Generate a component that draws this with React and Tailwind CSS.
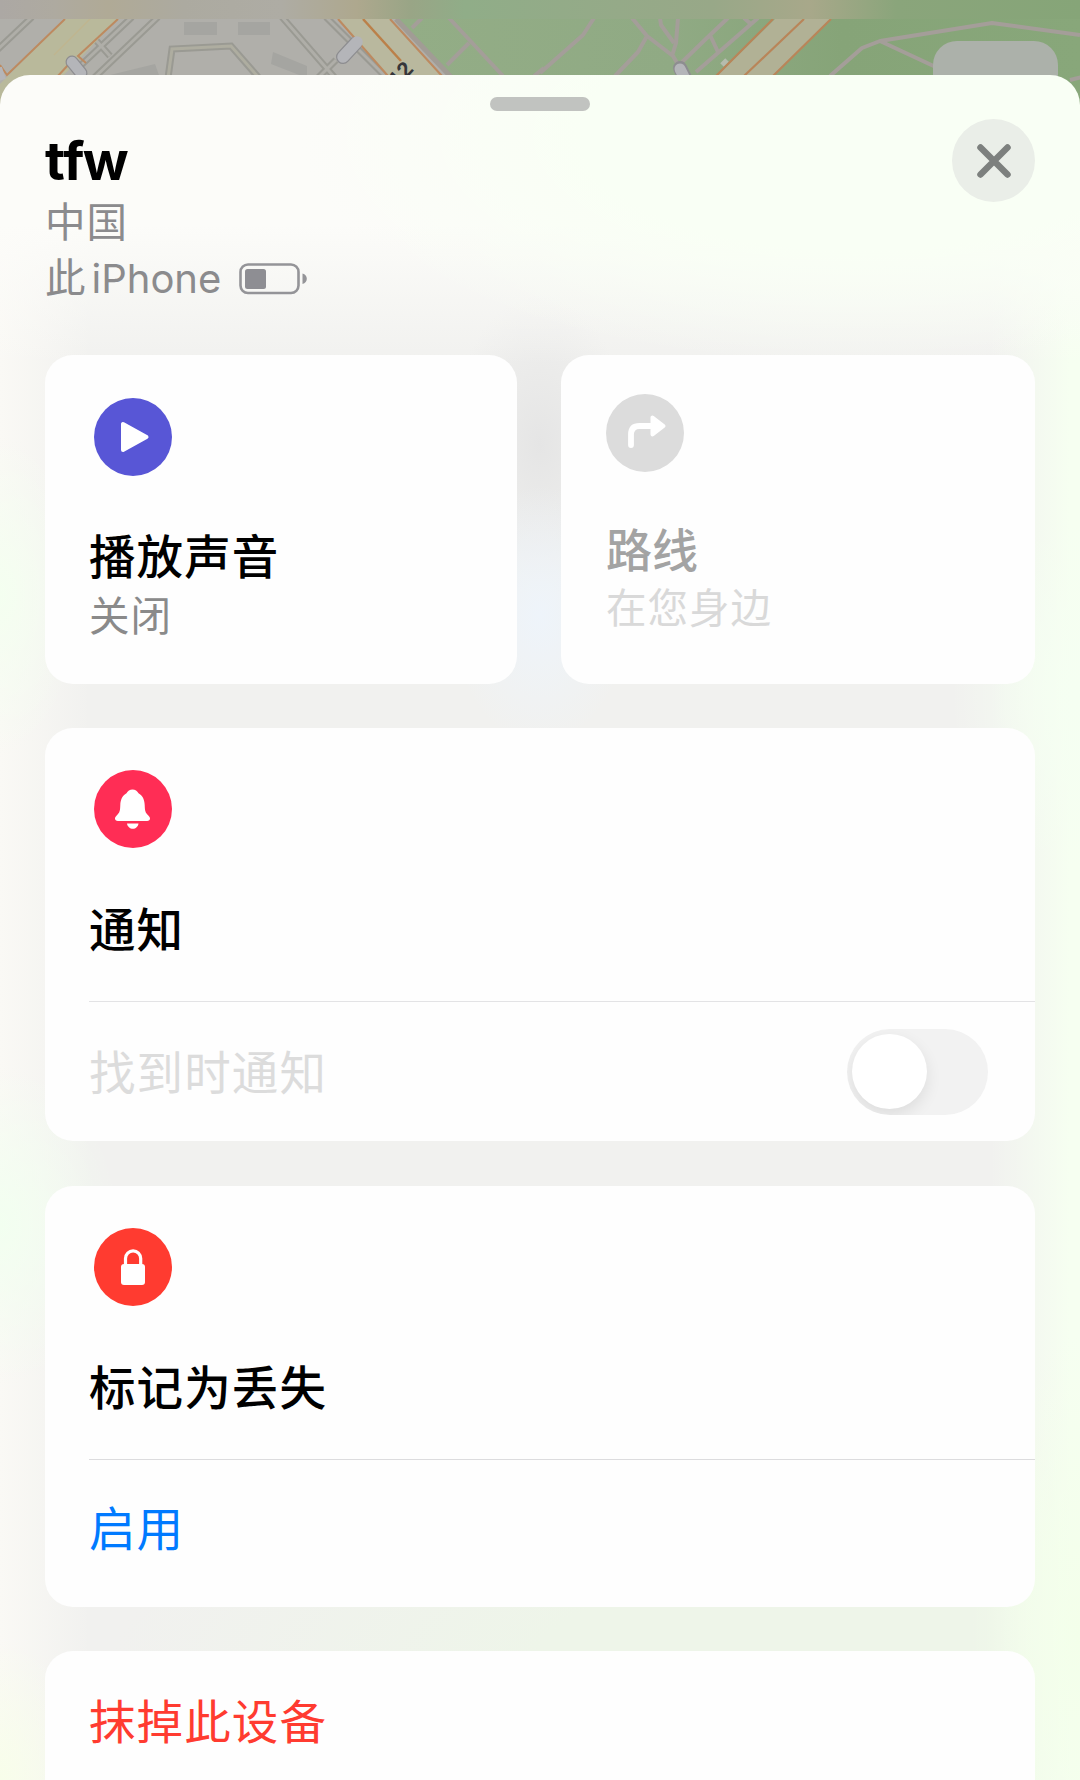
const ICON = "h-[78px] w-[78px] shrink-0";

function MapStrip() {
  return (
    <svg className="absolute left-0 top-0 h-[110px] w-[1080px]" viewBox="0 0 1080 110" fill="none">
      <defs>
        <linearGradient id="park" x1="400" y1="0" x2="1080" y2="0" gradientUnits="userSpaceOnUse">
          <stop offset="0" stopColor="#93ad86" />
          <stop offset="0.4" stopColor="#90aa84" />
          <stop offset="0.65" stopColor="#86a478" />
          <stop offset="1" stopColor="#88a77a" />
        </linearGradient>
        <linearGradient id="status" x1="0" y1="0" x2="1080" y2="0" gradientUnits="userSpaceOnUse">
          <stop offset="0" stopColor="#aca8a4" />
          <stop offset="0.05" stopColor="#aeaaa0" />
          <stop offset="0.1" stopColor="#b0aa96" />
          <stop offset="0.17" stopColor="#acaaa0" />
          <stop offset="0.26" stopColor="#aeaca4" />
          <stop offset="0.33" stopColor="#aea88e" />
          <stop offset="0.38" stopColor="#99a586" />
          <stop offset="0.43" stopColor="#90ad88" />
          <stop offset="0.66" stopColor="#98a888" />
          <stop offset="0.75" stopColor="#a8a88a" />
          <stop offset="0.83" stopColor="#8aa57b" />
          <stop offset="1" stopColor="#86a578" />
        </linearGradient>
      </defs>
      <rect width="1080" height="110" fill="#b0afaa" />
      <path d="M396 0V19L452 78V110H1080V0Z" fill="url(#park)" />
      <g fill="#a5a5a1">
        <path d="M184 22h33v13h-33zM238 22h32v13h-32zM110 75l45-11 5 14h-50zM273 52l34 14v12l-36-14z" />
      </g>
      <g stroke="#9a9a93" strokeWidth="7">
        <path d="M-4 51L32 17M132 17L78 68M158 17L94 78M94 38l16 18M282 17L335 78M326 17L387 78M318 78l18-18" />
        <path d="M168 78l4-29 59-3 28 32" />
      </g>
      <g stroke="#afaea8" strokeWidth="3">
        <path d="M-4 51L32 17M132 17L78 68M158 17L94 78M94 38l16 18M282 17L335 78M326 17L387 78M318 78l18-18" />
        <path d="M168 78l4-29 59-3 28 32" stroke="#aeada0" />
      </g>
      <path d="M65 19L0 84V110H30L118 19Z" fill="#b9b99b" />
      <path d="M65 19L7 75L0 65M118 19L78 56L86 63M69 64L57 77" stroke="#bd8a60" strokeWidth="2" />
      <path d="M90 19L54 55" stroke="#bfb58f" strokeWidth="1.500" />
      <path d="M72 62l9 11" stroke="#8d8d90" strokeWidth="13" strokeLinecap="round" />
      <path d="M72 62l9 11" stroke="#b4b5b9" strokeWidth="10.500" strokeLinecap="round" />
      <path d="M-2 68l4 12" stroke="#b4b5b9" strokeWidth="8" />
      <path d="M338 19L388 76H442L390 19Z" fill="#b9b89e" />
      <path d="M338 19L388 76M390 19L442 76" stroke="#bd8a60" strokeWidth="2" />
      <path d="M363 19L401 61" stroke="#bb8049" strokeWidth="2.500" />
      <path d="M396 19L452 78" stroke="#a19c95" strokeWidth="5" />
      <path d="M355 44L343 57" stroke="#8d8d90" strokeWidth="14" strokeLinecap="round" />
      <path d="M357 42L343 57" stroke="#b4b5b9" strokeWidth="11.500" strokeLinecap="round" />
      <g stroke="#a49e99" strokeWidth="4" strokeLinejoin="round">
        <path d="M412 28l10-10M449 18L503 76M469 43L447 65M534 76l10-8" />
        <path d="M594 18l-11 17-43 38M632 18l15 18 26 20 6 10M647 36l-9 16-23 24M660 18l1 7 13 18M678 18l-2 25-4 13" />
        <path d="M728 18L710 35 682 62M710 35l8 17M758 18L696 72M744 18l8 7" />
        <path d="M830 76l32-28 18-7 112-18 88 12M880 41l60 28" />
      </g>
      <path d="M680 68l5 10" stroke="#8d8d90" strokeWidth="14" strokeLinecap="round" />
      <path d="M680 69l5 10" stroke="#b4b5b9" strokeWidth="11" strokeLinecap="round" />
      <path d="M722 65l5-5" stroke="#b5bcae" strokeWidth="5" />
      <path d="M775 19L717 76H773L831 19Z" fill="#b1b195" />
      <path d="M773 19L716 76M831 19L773 76M804 19L744 76" stroke="#b98559" strokeWidth="2.200" />
      <rect width="1080" height="19" fill="url(#status)" />
      <text x="398" y="88" transform="rotate(-48 398 88)" fill="#35363a" stroke="#b8b89f" strokeWidth="2" paintOrder="stroke" fontSize="22" fontWeight="700" fontFamily="Liberation Sans, sans-serif">12</text>
      <rect x="933" y="41" width="125" height="70" rx="24" fill="#acb1aa" />
      <path d="M1070 80l12-3" stroke="#a49e99" strokeWidth="4" />
    </svg>
  );
}

function PlayIcon() {
  return (
    <svg className={ICON} viewBox="0 0 78 78">
      <circle cx="39" cy="39" r="39" fill="#5856d6" />
      <path d="M29 26v26L52.500 39Z" fill="#fff" stroke="#fff" strokeWidth="4" strokeLinejoin="round" />
    </svg>
  );
}

function RouteIcon() {
  return (
    <svg className={ICON} viewBox="0 0 78 78" fill="none">
      <circle cx="39" cy="39" r="39" fill="#dcdcdc" />
      <path d="M25 51V40.500q0-8.500 8.500-8.500H46" stroke="#fff" strokeWidth="5.800" strokeLinecap="round" />
      <path d="M46.500 23.500V40.500L57.500 32Z" fill="#fff" stroke="#fff" strokeWidth="4" strokeLinejoin="round" />
    </svg>
  );
}

function BellIcon() {
  return (
    <svg className={ICON} viewBox="0 0 78 78">
      <circle cx="39" cy="39" r="39" fill="#ff2d55" />
      <path
        d="M38.500 19.500c-2.700 0-4.800 1.400-6 3.700-4 2.200-6 6.200-6.200 11.800-.2 6-.6 7.500-3.400 10.300-1.300 1.300-1.900 2-1.900 3.200 0 1.500 1.100 2.500 2.900 2.500h29.200c1.800 0 2.900-1 2.900-2.500 0-1.200-.6-1.900-1.900-3.200-2.800-2.800-3.200-4.300-3.400-10.300-.2-5.600-2.200-9.600-6.200-11.800-1.200-2.300-3.300-3.700-6-3.700Z"
        fill="#fff"
      />
      <path d="M33 53.500h11.500c-.5 3.200-2.800 5.300-5.700 5.300s-5.300-2.100-5.800-5.300Z" fill="#fff" />
    </svg>
  );
}

function LockIcon() {
  return (
    <svg className={ICON} viewBox="0 0 78 78" fill="none">
      <circle cx="39" cy="39" r="39" fill="#ff3b30" />
      <rect x="27" y="36" width="24" height="21" rx="3" fill="#fff" />
      <path d="M31.500 37.500V30.500a7.600 7.600 0 0 1 15.200 0V37.500" stroke="#fff" strokeWidth="3.200" />
    </svg>
  );
}

function Battery() {
  return (
    <svg className="ml-[18px] h-[32px] w-[69px]" viewBox="0 0 69 32" fill="none">
      <rect x="1.500" y="1.500" width="58" height="28.500" rx="7.500" stroke="#949498" strokeWidth="2.600" />
      <rect x="6" y="6" width="21" height="20" rx="2.500" fill="#8e8e93" />
      <path d="M63.500 10.500c2.800.8 4.300 2.800 4.300 5.300s-1.500 4.500-4.300 5.300Z" fill="#949498" />
    </svg>
  );
}

const TITLE = "text-[46.500px] leading-[60px] font-medium tracking-[1.100px] whitespace-nowrap";
const BODY = "text-[46.500px] leading-[60px] tracking-[1.100px] whitespace-nowrap";
const SUB = "text-[40.500px] leading-[56px] tracking-[1px] whitespace-nowrap";
const CARD = "rounded-[28px] bg-[#fefefe]";

export default function App() {
  return (
    <div
      lang="zh-CN"
      className="relative h-[1780px] w-[1080px] overflow-hidden pt-[75px] text-black [font-family:Inter,'Noto_Sans_CJK_SC',sans-serif]"
    >
      <MapStrip />
      <main className="relative flex h-[1705px] flex-col overflow-hidden rounded-t-[30px] bg-[#f1f1ef] bg-[radial-gradient(ellipse_560px_230px_at_860px_60px,#f9fff5_50%,#f9fff500),linear-gradient(180deg,#fcfcf9_0px,#fcfcf9_150px,#fcfcf900_290px),radial-gradient(ellipse_90px_130px_at_540px_540px,#eef4fa,#eef4fa00),radial-gradient(ellipse_90px_150px_at_540px_370px,#e5e5e5,#e5e5e500),radial-gradient(ellipse_80px_160px_at_0px_520px,#f4fff0,#f4fff000),radial-gradient(ellipse_120px_160px_at_0px_1150px,#f2fff0,#f2fff000),radial-gradient(ellipse_90px_140px_at_0px_1705px,#f8feea,#f8feea00),radial-gradient(ellipse_130px_180px_at_1080px_620px,#f5fff2,#f5fff200),radial-gradient(ellipse_110px_300px_at_1080px_1560px,#f3ffea,#f3ffea00),linear-gradient(90deg,#faf9f5_0px,#faf9f500_90px,#f6fff100_990px,#f6fff1_1070px),radial-gradient(ellipse_850px_230px_at_960px_1590px,#eef5e9_50%,#eef5e900)] px-[45px]">
        <div className="mt-[22px] h-[14px] w-[100px] shrink-0 self-center rounded-full bg-[#c1c3c0]" />
        <header className="flex h-[244px] shrink-0 justify-between">
          <div className="flex flex-col pt-[18px]">
            <h1 className="h-[66px] text-[54px] leading-[64px] font-bold tracking-[-1.700px] [font-kerning:none]">tfw</h1>
            <p className={`${SUB} h-[56px] text-[#8b8b8d]`}>中国</p>
            <div className="flex h-[56px] items-center text-[#8b8b8d]">
              <span className={SUB}>此</span>
              <span className="ml-[5px] text-[40px] leading-[56px]">iPhone</span>
              <Battery />
            </div>
          </div>
          <button aria-label="关闭" className="mt-[8px] flex h-[83px] w-[83px] items-center justify-center rounded-full bg-[#eaeee8]">
            <svg className="h-[36px] w-[36px]" viewBox="0 0 36 36" fill="none">
              <path d="M4.500 4.500L31.500 31.500M31.500 4.500L4.500 31.500" stroke="#7d807e" strokeWidth="6.500" strokeLinecap="round" />
            </svg>
          </button>
        </header>

        <div className="flex shrink-0 gap-[44px]">
          <section className={`${CARD} flex h-[329px] flex-1 flex-col px-[44px] pt-[43px]`}>
            <div className="ml-[5px] flex"><PlayIcon /></div>
            <h2 className={`${TITLE} mt-[51px]`}>播放声音</h2>
            <p className={`${SUB} mt-[2px] text-[#8a8a8a]`}>关闭</p>
          </section>
          <section className={`${CARD} flex h-[329px] flex-1 flex-col px-[45px] pt-[39px]`}>
            <div className="flex"><RouteIcon /></div>
            <h2 className="mt-[48px] text-[46px] leading-[60px] font-medium whitespace-nowrap text-[#a3a3a3]">路线</h2>
            <p className={`${SUB} mt-[1px] text-[#d9d9d9]`}>在您身边</p>
          </section>
        </div>

        <section className={`${CARD} mt-[44px] flex h-[413px] shrink-0 flex-col pl-[44px]`}>
          <div className="flex h-[274px] flex-col border-b border-[#e3e3e5] pt-[42px]">
            <div className="ml-[5px] flex"><BellIcon /></div>
            <h2 className={`${TITLE} mt-[52px]`}>通知</h2>
          </div>
          <div className="flex flex-1 items-center justify-between pr-[47px]">
            <span className={`${BODY} pt-[2px] text-[#dcdcdc]`}>找到时通知</span>
            <div className="flex h-[86px] w-[141px] items-center overflow-hidden rounded-full bg-[#f2f2f2] pl-[5px]">
              <div className="h-[75px] w-[75px] rounded-full bg-white shadow-[0_6px_16px_rgba(0,0,0,0.09)]" />
            </div>
          </div>
        </section>

        <section className={`${CARD} mt-[45px] flex h-[421px] shrink-0 flex-col pl-[44px]`}>
          <div className="flex h-[274px] flex-col border-b border-[#dcdcde] pt-[42px]">
            <div className="ml-[5px] flex"><LockIcon /></div>
            <h2 className={`${TITLE} mt-[52px]`}>标记为丢失</h2>
          </div>
          <button className={`${BODY} mt-[39px] self-start text-[#007aff]`}>启用</button>
        </section>

        <section className={`${CARD} mt-[44px] flex h-[170px] shrink-0 flex-col px-[44px] pt-[41px]`}>
          <button className={`${BODY} self-start text-[#ff3b30]`}>抹掉此设备</button>
        </section>
      </main>
    </div>
  );
}
